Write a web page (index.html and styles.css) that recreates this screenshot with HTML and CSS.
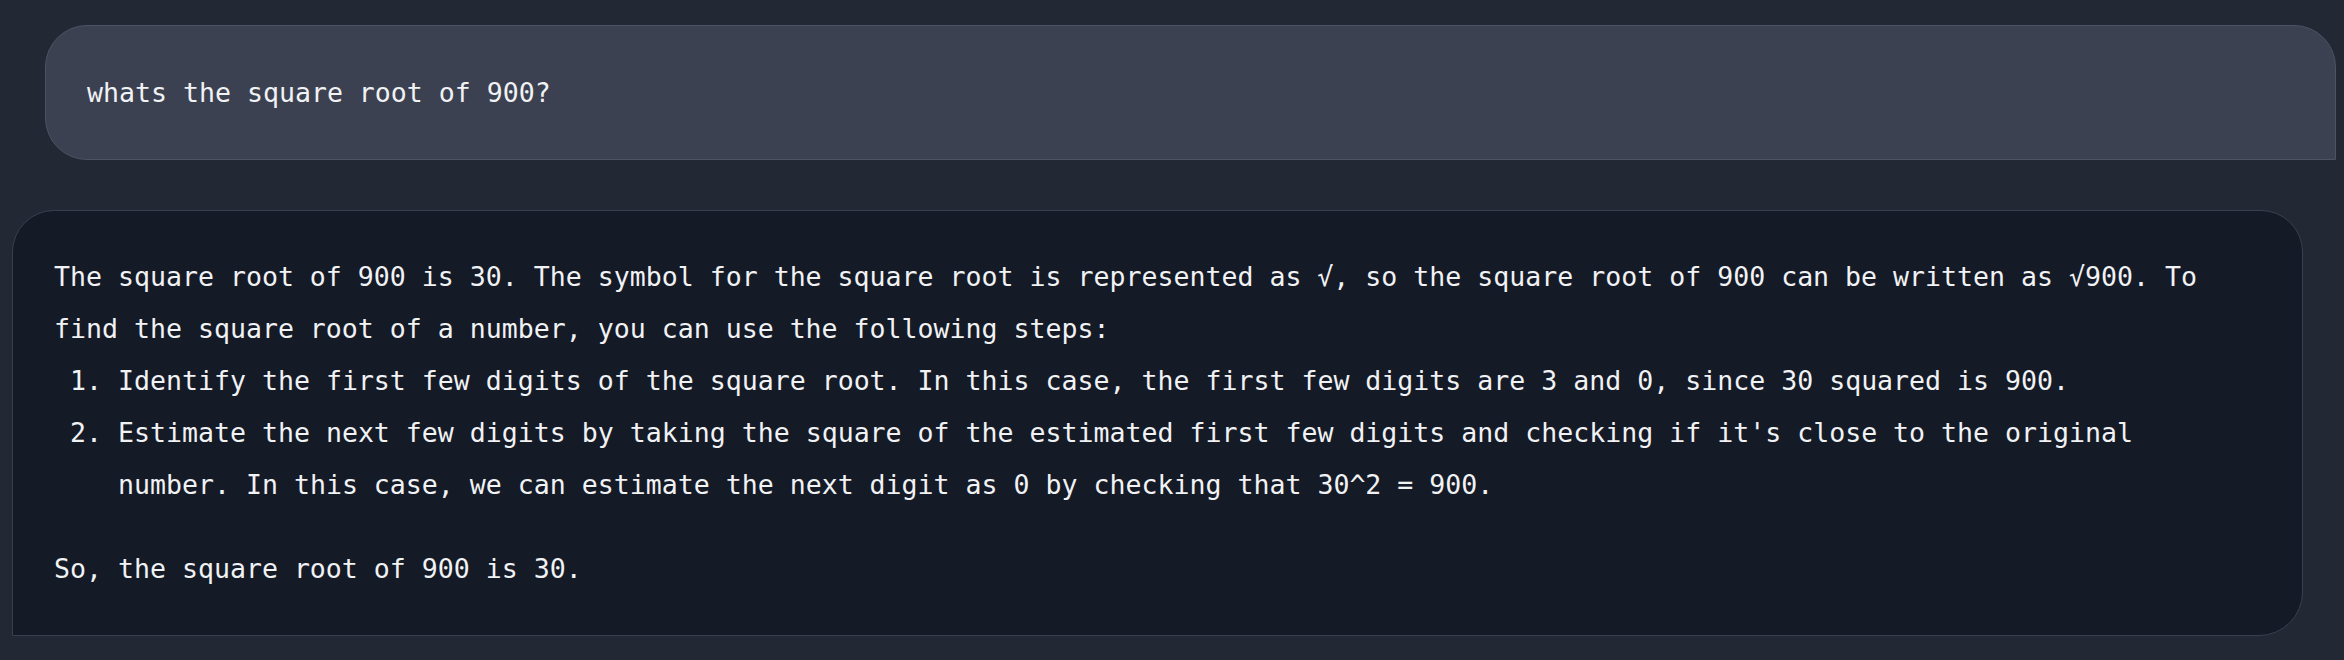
FILE: index.html
```html
<!DOCTYPE html>
<html lang="en">
<head>
<meta charset="utf-8">
<title>Chat</title>
<link rel="stylesheet" href="styles.css">
</head>
<body>
<main class="chat">
  <div class="bubble bubble-user">
    <p class="msg">whats the square root of 900?</p>
  </div>
  <div class="bubble bubble-bot">
    <p class="msg">The square root of 900 is 30. The symbol for the square root is represented as √, so the square root of 900 can be written as √900. To find the square root of a number, you can use the following steps:</p>
    <ol class="steps">
      <li>Identify the first few digits of the square root. In this case, the first few digits are 3 and 0, since 30 squared is 900.</li>
      <li>Estimate the next few digits by taking the square of the estimated first few digits and checking if it's close to the original number. In this case, we can estimate the next digit as 0 by checking that 30^2 = 900.</li>
    </ol>
    <p class="msg">So, the square root of 900 is 30.</p>
  </div>
</main>
</body>
</html>
```
FILE: styles.css
```css
html, body {
  margin: 0;
  padding: 0;
  background: #232835;
}

body {
  width: 2344px;
  height: 660px;
  overflow: hidden;
  font-family: "DejaVu Sans Mono", "Liberation Mono", monospace;
  font-size: 26.57px;
  line-height: 52px;
  color: #f1f2f4;
}

.chat {
  display: flex;
  flex-direction: column;
  gap: 50px;
  padding-top: 25px;
}

.bubble {
  border-style: solid;
  border-width: 1px;
  box-sizing: border-box;
  width: 2291px;
}

.bubble-user {
  margin-left: 45px;
  background: #3b4151;
  border-color: #4c5364;
  border-radius: 42px 42px 0 42px;
  padding: 41px 42px 40px 41px;
}

.bubble-bot {
  margin-left: 12px;
  background: #151a27;
  border-color: #393f4d;
  border-radius: 42px 42px 44px 0;
  padding: 40px 46px 40px 41px;
}

.msg {
  margin: 0;
  white-space: normal;
}

.steps {
  margin: 0 0 32px 0;
  padding-left: 64px;
}

.steps li {
  margin: 0;
}
```
